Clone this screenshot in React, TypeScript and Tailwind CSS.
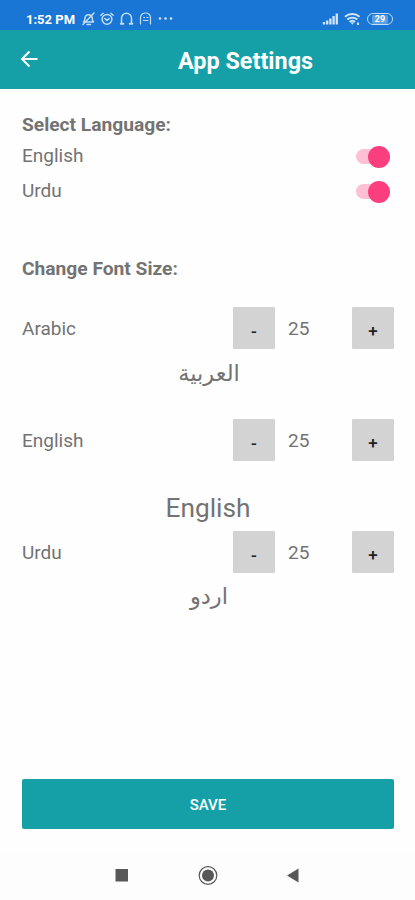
import { useState } from 'react';

type SizeKey = 'arabic' | 'english' | 'urdu';

interface ToggleProps {
  label: string;
  checked: boolean;
  onChange: (next: boolean) => void;
}

interface SizeRowProps {
  label: string;
  value: number;
  onChange: (next: number) => void;
}

function StatusBar() {
  return (
    <div className="flex h-[30px] items-center justify-between bg-[#1976d4] pt-[8px] pl-[26px] pr-[22px] text-white">
      <div className="flex items-center">
        <span className="w-[56px] text-[13px] leading-none font-bold whitespace-nowrap">1:52 PM</span>
        <svg width="92" height="16" viewBox="0 0 92 16" fill="none" stroke="#c3ddf8" strokeWidth="1.5" strokeLinecap="round" strokeLinejoin="round">
          {/* muted bell */}
          <path d="M1.5 11h10c-1.2-1.2-1.3-2.600-1.300-4.300A3.700 3.700 0 0 0 3 6.700C3 8.500 2.700 10 1.500 11zM5 13.500h3.500M1 13.500 12 2" />
          {/* alarm clock */}
          <circle cx="25" cy="8.300" r="4.900" />
          <path d="m22.800 7.500 2.200 1.900 2.200-1.900M18.900 4.200l2.200-1.900M31.100 4.200l-2.200-1.900" />
          {/* headset */}
          <path d="M39.500 12V7.300a5 5 0 0 1 10 0V12" />
          <path d="M38.800 12.800h2.500M47.800 12.800h2.500" strokeWidth="2" />
          {/* ghost */}
          <path d="M58.500 13v-6.500a5 4.500 0 0 1 10 0v6.500M61.700 6.500h1M65 6.500h1M61.500 9.500h4.500" strokeWidth="1.200" />
          <g fill="#d3e6fa" stroke="none">
            <circle cx="78" cy="7.500" r="1.300" />
            <circle cx="83.500" cy="7.500" r="1.300" />
            <circle cx="89" cy="7.500" r="1.300" />
          </g>
        </svg>
      </div>
      <div className="flex items-center">
        <svg width="42" height="16" viewBox="0 0 42 16" fill="none" stroke="#d3e6fa">
          <path d="M2 13.500v-2.500M5.200 13.500V9.500M8.400 13.500V7.500M11.600 13.500V5M14.800 13.500V2.500" strokeWidth="2.300" />
          <path d="M23 5.800a11 11 0 0 1 14.500 0M25.300 8.500a7.500 7.500 0 0 1 10 0M27.600 11a4 4 0 0 1 5.400 0" strokeWidth="1.900" />
          <path d="m28.500 11.500 1.800 2.300 1.800-2.300z" fill="#d3e6fa" stroke="none" />
          <path d="M36 11.500v2.500" strokeWidth="2" />
        </svg>
        <div className="ml-[3px] flex h-[12px] w-[26px] items-center justify-center rounded-full border-[1.5px] border-[#c3ddf8] bg-[#1976d4] text-[9px] leading-none font-bold">
          <span className="rounded-[2px] bg-[#5b9fe4] px-[3px]">29</span>
        </div>
      </div>
    </div>
  );
}

function Header() {
  return (
    <header className="flex h-[59px] items-center bg-[#15a0a7] text-white">
      <button className="ml-[20px] w-[20px]" aria-label="Back">
        <svg width="20" height="20" viewBox="0 0 20 20" fill="none" stroke="currentColor" strokeWidth="2">
          <path d="M17.500 9H2.500M9.500 1.500 2 9l7.500 7.500" />
        </svg>
      </button>
      <h1 className="ml-[138px] pt-[4px] text-[23.4px] leading-none font-bold">App Settings</h1>
    </header>
  );
}

function LanguageToggle({ label, checked, onChange }: ToggleProps) {
  return (
    <div className="flex h-[35px] items-center justify-between">
      <span className="text-[19px]">{label}</span>
      <button
        role="switch"
        aria-checked={checked}
        aria-label={label}
        onClick={() => onChange(!checked)}
        className={`mr-[4px] flex h-[15px] w-[34px] items-center rounded-full ${
          checked ? 'justify-end bg-[#ffc0d6]' : 'justify-start bg-[#c4c4c4]'
        }`}
      >
        <span className={`size-[22px] shrink-0 rounded-full ${checked ? 'bg-[#fb3e7d]' : 'bg-[#f4f4f4]'}`} />
      </button>
    </div>
  );
}

function SizeRow({ label, value, onChange }: SizeRowProps) {
  const button = 'h-[42px] w-[42px] rounded-[1px] bg-[#d3d3d3] pt-[7px] text-[17px] font-medium text-[#222]';

  return (
    <div className="flex h-[42px] items-center">
      <span className="w-[211px] pt-[2px] text-[19px]">{label}</span>
      <button className={button} onClick={() => onChange(value - 1)}>-</button>
      <span className="w-[77px] pt-[2px] pl-[13px] text-[19px]">{value}</span>
      <button className={button} onClick={() => onChange(value + 1)}>+</button>
    </div>
  );
}

function NavigationBar() {
  return (
    <nav className="h-[49px] bg-[#fdfdfd]">
      <svg width="415" height="49" viewBox="0 0 415 49" fill="#585858">
        <rect x="115.500" y="18" width="12.500" height="12.500" />
        <circle cx="208" cy="24.500" r="8.800" fill="none" stroke="#585858" strokeWidth="1.200" />
        <circle cx="208" cy="24.500" r="6" />
        <path d="M287 24.500 298.500 17.500v14z" />
      </svg>
    </nav>
  );
}

export default function App() {
  const [english, setEnglish] = useState(true);
  const [urdu, setUrdu] = useState(true);
  const [sizes, setSizes] = useState<Record<SizeKey, number>>({ arabic: 25, english: 25, urdu: 25 });

  const setSize = (key: SizeKey) => (next: number) => setSizes((prev) => ({ ...prev, [key]: next }));

  return (
    <div className="flex h-[900px] w-[415px] flex-col overflow-hidden bg-[#fefefe] font-['Roboto','Noto_Sans','DejaVu_Sans',sans-serif] text-[#737373]">
      <StatusBar />
      <Header />

      <main className="flex flex-1 flex-col pr-[21px] pl-[22px]">
        <h2 className="mt-[24px] h-[26px] text-[19.2px] leading-[24px] font-bold">Select Language:</h2>
        <LanguageToggle label="English" checked={english} onChange={setEnglish} />
        <LanguageToggle label="Urdu" checked={urdu} onChange={setUrdu} />

        <h2 className="mt-[48px] mb-[26px] h-[24px] text-[19.2px] leading-[24px] font-bold">Change Font Size:</h2>

        <SizeRow label="Arabic" value={sizes.arabic} onChange={setSize('arabic')} />
        <p lang="ar" dir="rtl" className="h-[70px] pt-[6px] pl-[2px] text-center leading-[36px]" style={{ fontSize: sizes.arabic * 0.9 }}>
          العربية
        </p>
        <SizeRow label="English" value={sizes.english} onChange={setSize('english')} />
        <p className="h-[70px] pt-[29px] text-center leading-[36px]" style={{ fontSize: sizes.english * 1.05 }}>
          English
        </p>
        <SizeRow label="Urdu" value={sizes.urdu} onChange={setSize('urdu')} />
        <p lang="ur" dir="rtl" className="pt-[5px] pl-[2px] text-center leading-[36px]" style={{ fontSize: sizes.urdu * 0.9 }}>
          اردو
        </p>

        <button className="mt-auto mb-[22px] h-[50px] rounded-[2px] bg-[#15a0a7] pt-[2px] text-[15px] font-medium text-white">
          SAVE
        </button>
      </main>

      <NavigationBar />
    </div>
  );
}
